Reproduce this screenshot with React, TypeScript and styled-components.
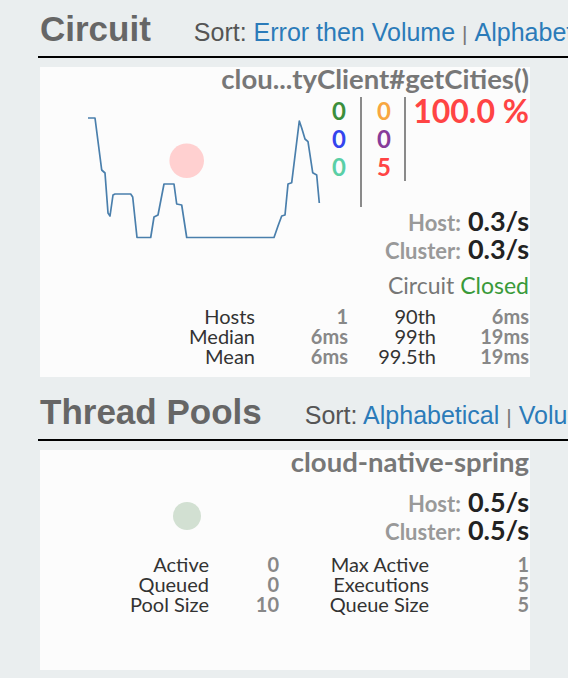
import React from 'react'
import styled, { createGlobalStyle } from 'styled-components'

const GlobalStyle = createGlobalStyle`
  html, body {
    margin: 0;
    padding: 0;
    background: #eaeeef;
    overflow: hidden;
  }
  body {
    font-family: Lato, "Noto Sans", sans-serif;
  }
`

const Page = styled.div`
  width: 568px;
  height: 678px;
  overflow: hidden;
  background: #eaeeef;
`

const Section = styled.section`
  padding-left: 38px;
  margin-bottom: 6px;
`

const SectionHeader = styled.div`
  display: flex;
  align-items: baseline;
  width: 700px;
  padding: 9px 0 7px 2px;
  border-bottom: 2px solid #000;
  white-space: nowrap;
  font-family: "Liberation Sans", Arial, sans-serif;
`

const Heading = styled.h3`
  margin: 0;
  font-size: 35px;
  line-height: 40px;
  font-weight: 700;
  color: #666;
`

const SortMenu = styled.div`
  margin-left: 43px;
  font-size: 25px;
  color: #555;
  a {
    color: #2b7bb9;
    text-decoration: none;
  }
`

const Pipe = styled.span`
  color: #777;
  font-size: 21px;
  margin: 0 7px;
`

const Card = styled.div<{ $height: number }>`
  margin: 9px 0 0 2px;
  width: 490px;
  height: ${p => p.$height}px;
  box-sizing: border-box;
  padding-right: 1px;
  background: #fcfcfc;
  display: grid;
  grid-template-columns: 290px 1fr;
  align-content: start;
`

const CardTitle = styled.div`
  grid-column: 1 / -1;
  text-align: right;
  font-size: 27.5px;
  line-height: 24px;
  font-weight: 700;
  color: #777;
  white-space: nowrap;
`

const Chart = styled.svg`
  display: block;
`

const Side = styled.div<{ $top: number }>`
  padding-top: ${p => p.$top}px;
  display: flex;
  flex-direction: column;
  align-items: stretch;
`

const CountRow = styled.div`
  display: flex;
  align-items: flex-start;
`

const Counts = styled.div<{ $width: number; $rule: number; $pad: number }>`
  width: ${p => p.$width}px;
  height: ${p => p.$rule}px;
  box-sizing: border-box;
  padding-right: ${p => p.$pad}px;
  border-right: 2px solid #8a8a8a;
  text-align: right;
`

const Count = styled.div<{ $color: string }>`
  font-size: 24px;
  line-height: 28px;
  font-weight: 700;
  color: ${p => p.$color};
`

const ErrorRate = styled.div`
  flex: 1;
  text-align: right;
  font-size: 32px;
  line-height: 28px;
  font-weight: 700;
  color: #f44;
  white-space: nowrap;
`

const Rate = styled.div`
  display: flex;
  justify-content: flex-end;
  align-items: baseline;
  gap: 7px;
  height: 28px;
  white-space: nowrap;
`

const RateLabel = styled.span`
  font-size: 22px;
  line-height: 1;
  font-weight: 700;
  color: #999;
`

const RateValue = styled.span`
  font-size: 27px;
  line-height: 1;
  font-weight: 700;
  color: #222;
`

const Status = styled.div`
  margin-top: 7px;
  text-align: right;
  font-size: 23px;
  line-height: 30px;
  color: #777;
`

const Closed = styled.span`
  color: #3a9a3a;
`

const Stats = styled.div<{ $cols: string; $top: number }>`
  grid-column: 1 / -1;
  margin-top: ${p => p.$top}px;
  display: grid;
  grid-template-columns: ${p => p.$cols};
  font-size: 20px;
  line-height: 20px;
  text-align: right;
  white-space: nowrap;
`

const StatLabel = styled.div`
  color: #333;
`

const StatValue = styled.div`
  font-weight: 700;
  color: #888;
`

const sparkline = [
  [88, 118], [95, 118], [101.7, 170], [105, 173], [108, 213], [110, 216],
  [113, 195], [115, 194], [130.7, 194], [132.7, 197], [137, 237.5],
  [150.7, 237.5], [154, 217], [158, 215], [164, 184], [174, 184],
  [176.7, 204], [181.7, 205], [186.7, 237.5], [274, 237.5], [278, 226],
  [281.7, 216], [285, 215], [288, 184], [291.7, 182.7], [299.3, 121],
  [301.7, 128], [305, 139], [308, 141.7], [312.7, 172.7], [316.7, 175],
  [319.3, 203],
]
  .map(([x, y]) => `${x},${y}`)
  .join(' ')

type StatRow = [string, string, string, string]

const circuitStats: StatRow[] = [
  ['Hosts', '1', '90th', '6ms'],
  ['Median', '6ms', '99th', '19ms'],
  ['Mean', '6ms', '99.5th', '19ms'],
]

const poolStats: StatRow[] = [
  ['Active', '0', 'Max Active', '1'],
  ['Queued', '0', 'Executions', '5'],
  ['Pool Size', '10', 'Queue Size', '5'],
]

const StatsTable = ({ rows, cols, top }: { rows: StatRow[]; cols: string; top: number }) => (
  <Stats $cols={cols} $top={top}>
    {rows.map(r => (
      <React.Fragment key={r[0]}>
        <StatLabel>{r[0]}</StatLabel>
        <StatValue>{r[1]}</StatValue>
        <StatLabel>{r[2]}</StatLabel>
        <StatValue>{r[3]}</StatValue>
      </React.Fragment>
    ))}
  </Stats>
)

const RateLine = ({ label, value }: { label: string; value: string }) => (
  <Rate>
    <RateLabel>{label}</RateLabel>
    <RateValue>{value}</RateValue>
  </Rate>
)

const App = () => {
  return (
    <Page>
      <GlobalStyle />
      <Section>
        <SectionHeader>
          <Heading>Circuit</Heading>
          <SortMenu>
            Sort: <a href="#">Error then Volume</a>
            <Pipe>|</Pipe>
            <a href="#">Alphabetical</a>
            <Pipe>|</Pipe>
            <a href="#">Volume</a>
          </SortMenu>
        </SectionHeader>
        <Card $height={310}>
          <CardTitle>clou...tyClient#getCities()</CardTitle>
          <Chart width={290} height={209} viewBox="40 91 290 209">
            <circle cx={186.7} cy={160.7} r={17.3} fill="#ffd0d0" />
            <polyline
              points={sparkline}
              fill="none"
              stroke="#4a7fac"
              strokeWidth={1.7}
              strokeLinejoin="round"
            />
          </Chart>
          <Side $top={6}>
            <CountRow>
              <Counts $width={32} $rule={110} $pad={14}>
                <Count $color="#3b8f3b">0</Count>
                <Count $color="#3344ee">0</Count>
                <Count $color="#5acfa6">0</Count>
              </Counts>
              <Counts $width={44} $rule={84} $pad={13}>
                <Count $color="#f8a640">0</Count>
                <Count $color="#873c9a">0</Count>
                <Count $color="#f44">5</Count>
              </Counts>
              <ErrorRate>100.0 %</ErrorRate>
            </CountRow>
            <RateLine label="Host:" value="0.3/s" />
            <RateLine label="Cluster:" value="0.3/s" />
            <Status>
              Circuit <Closed>Closed</Closed>
            </Status>
          </Side>
          <StatsTable rows={circuitStats} cols="1fr 93px 88px 93px" top={6} />
        </Card>
      </Section>
      <Section>
        <SectionHeader>
          <Heading>Thread Pools</Heading>
          <SortMenu>
            Sort: <a href="#">Alphabetical</a>
            <Pipe>|</Pipe>
            <a href="#">Volume</a>
          </SortMenu>
        </SectionHeader>
        <Card $height={220}>
          <CardTitle>cloud-native-spring</CardTitle>
          <Chart width={290} height={70} viewBox="40 474 290 70">
            <circle cx={187} cy={516} r={14} fill="#d2e0d2" />
          </Chart>
          <Side $top={14}>
            <RateLine label="Host:" value="0.5/s" />
            <RateLine label="Cluster:" value="0.5/s" />
          </Side>
          <StatsTable rows={poolStats} cols="1fr 70px 150px 100px" top={10} />
        </Card>
      </Section>
    </Page>
  )
}

export default App
